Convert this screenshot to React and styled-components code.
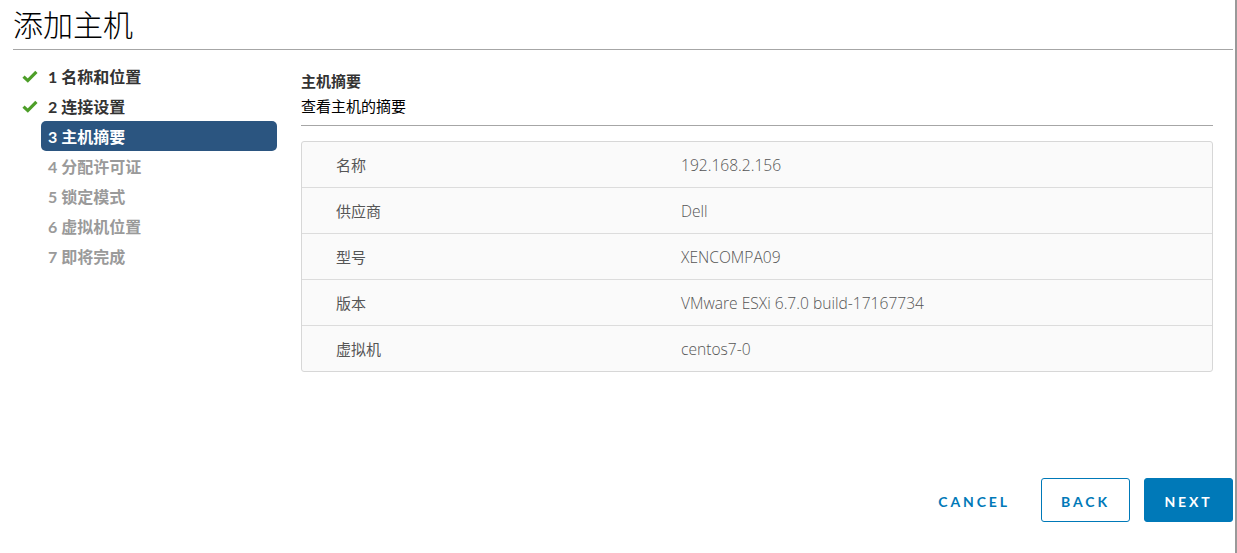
import React from "react";
import styled, { createGlobalStyle } from "styled-components";

const GlobalStyle = createGlobalStyle`
  html, body {
    margin: 0;
    padding: 0;
    background: #fff;
  }
  body {
    font-family: Lato, "Noto Sans CJK SC", sans-serif;
  }
  * {
    box-sizing: border-box;
  }
`;

const steps = [
  { n: 1, label: "名称和位置", state: "done" },
  { n: 2, label: "连接设置", state: "done" },
  { n: 3, label: "主机摘要", state: "active" },
  { n: 4, label: "分配许可证", state: "todo" },
  { n: 5, label: "锁定模式", state: "todo" },
  { n: 6, label: "虚拟机位置", state: "todo" },
  { n: 7, label: "即将完成", state: "todo" },
];

const rows = [
  ["名称", "192.168.2.156"],
  ["供应商", "Dell"],
  ["型号", "XENCOMPA09"],
  ["版本", "VMware ESXi 6.7.0 build-17167734"],
  ["虚拟机", "centos7-0"],
];

function Check() {
  return (
    <svg width="16" height="13" viewBox="0 0 16 13">
      <path
        d="M1.5 6.6 L5.8 10.6 L14.4 1.8"
        fill="none"
        stroke="#4d9e28"
        strokeWidth="3.2"
        strokeLinejoin="miter"
      />
    </svg>
  );
}

function App() {
  return (
    <>
      <GlobalStyle />
      <Dialog>
        <Header>
          <Title>添加主机</Title>
        </Header>
        <Body>
          <Nav>
            {steps.map((s) => (
              <NavRow key={s.n}>
                <IconSlot>{s.state === "done" && <Check />}</IconSlot>
                <NavItem state={s.state}>
                  {s.n} {s.label}
                </NavItem>
              </NavRow>
            ))}
          </Nav>
          <Content>
            <StepTitle>主机摘要</StepTitle>
            <StepDesc>查看主机的摘要</StepDesc>
            <Table>
              {rows.map(([k, v]) => (
                <Row key={k}>
                  <Label>{k}</Label>
                  <Value>{v}</Value>
                </Row>
              ))}
            </Table>
          </Content>
        </Body>
        <Footer>
          <Button variant="link">CANCEL</Button>
          <Button variant="outline">BACK</Button>
          <Button variant="primary">NEXT</Button>
        </Footer>
      </Dialog>
    </>
  );
}

const Dialog = styled.div`
  width: 1237px;
  height: 553px;
  display: flex;
  flex-direction: column;
  padding: 0 2px 31px 13px;
  border-right: 2px solid #999;
`;

const Header = styled.div`
  height: 50px;
  border-bottom: 1px solid #a6a6a6;
  display: flex;
  align-items: center;
`;

const Title = styled.h1`
  margin: 0;
  font-family: "Noto Sans CJK SC", sans-serif;
  font-size: 30px;
  font-weight: 300;
  color: #000;
  line-height: 36px;
  margin-top: -4px;
`;

const Body = styled.div`
  display: grid;
  grid-template-columns: 276px 1fr;
  padding-top: 11px;
`;

const Nav = styled.div`
  display: flex;
  flex-direction: column;
`;

const NavRow = styled.div`
  display: flex;
  align-items: center;
  height: 30px;
`;

const IconSlot = styled.div`
  width: 28px;
  padding-left: 9px;
  display: flex;
  align-items: center;
  padding-top: 1px;
`;

const NavItem = styled.div`
  width: 236px;
  height: 30px;
  padding-left: 7px;
  display: flex;
  align-items: center;
  font-size: 16px;
  font-weight: 700;
  border-radius: 5px;
  color: ${(p) =>
    p.state === "active" ? "#fff" : p.state === "done" ? "#333" : "#9a9a9a"};
  background: ${(p) => (p.state === "active" ? "#2b5580" : "transparent")};
`;

const Content = styled.div`
  margin-left: 12px;
  margin-right: 20px;
  padding-top: 8px;
`;

const StepTitle = styled.div`
  font-size: 15px;
  font-weight: 700;
  color: #333;
  line-height: 24px;
`;

const StepDesc = styled.div`
  font-size: 15px;
  color: #000;
  line-height: 26px;
  padding-bottom: 6px;
  border-bottom: 1px solid #a6a6a6;
`;

const Table = styled.div`
  margin-top: 15px;
  border: 1px solid #d7d7d7;
  border-radius: 3px;
  background: #fafafa;
`;

const Row = styled.div`
  display: grid;
  grid-template-columns: 345px 1fr;
  align-items: center;
  height: 46px;
  padding-left: 34px;
  font-size: 15px;
  color: #565656;
  &:first-child {
    height: 45px;
  }
  & + & {
    border-top: 1px solid #dcdcdc;
  }
`;

const Label = styled.div``;

const Value = styled.div`
  font-family: "Open Sans", "Noto Sans CJK SC", sans-serif;
  font-size: 15.6px;
  font-weight: 300;
  color: #555;
`;

const Footer = styled.div`
  margin-top: auto;
  display: flex;
  justify-content: flex-end;
  gap: 14px;
`;

const Button = styled.button`
  height: 44px;
  padding: 2px 16px 0;
  min-width: 89px;
  font-family: Lato, sans-serif;
  font-size: 14px;
  font-weight: 700;
  letter-spacing: 2.9px;
  border-radius: 3px;
  cursor: pointer;
  color: ${(p) => (p.variant === "primary" ? "#fff" : "#0079b8")};
  background: ${(p) => (p.variant === "primary" ? "#0079b8" : "transparent")};
  border: 1px solid
    ${(p) => (p.variant === "link" ? "transparent" : "#0079b8")};
`;

export default App;
